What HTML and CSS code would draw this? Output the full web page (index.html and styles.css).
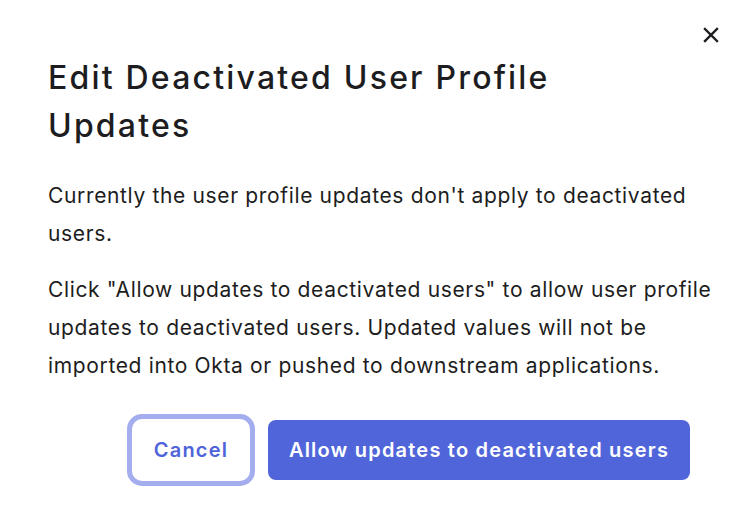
FILE: index.html
```html
<!DOCTYPE html>
<html lang="en">
<head>
<meta charset="utf-8">
<link rel="stylesheet" href="styles.css">
</head>
<body>
<div class="dialog">
  <button class="close" aria-label="Close">
    <svg width="16" height="16" viewBox="0 0 16 16"><path d="M2 2 L14 14 M14 2 L2 14" stroke="#1d1d21" stroke-width="2.4" stroke-linecap="square" fill="none"/></svg>
  </button>
  <h1 class="title">Edit Deactivated User Profile Updates</h1>
  <div class="content">
    <p>Currently the user profile updates don't apply to deactivated users.</p>
    <p>Click "Allow updates to deactivated users" to allow user profile updates to deactivated users. Updated values will not be imported into Okta or pushed to downstream applications.</p>
  </div>
  <div class="actions">
    <button class="btn btn-secondary">Cancel</button>
    <button class="btn btn-primary">Allow updates to deactivated users</button>
  </div>
</div>
</body>
</html>
```
FILE: styles.css
```css
html, body {
  margin: 0;
  padding: 0;
  background: #ffffff;
}
body {
  font-family: Inter, "Noto Sans", sans-serif;
  color: #1d1d21;
  width: 754px;
  height: 514px;
  overflow: hidden;
}
.dialog {
  position: relative;
  padding: 54px 30px 0 48px;
}
.close {
  position: absolute;
  top: 27px;
  right: 35px;
  width: 16px;
  height: 16px;
  padding: 0;
  border: 0;
  background: none;
  display: flex;
}
.title {
  margin: 0;
  font-size: 32px;
  line-height: 48px;
  font-weight: 500;
  letter-spacing: 2.2px;
  max-width: 560px;
}
.content {
  margin-top: 27px;
  max-width: 672px;
}
.content p {
  margin: 0;
  font-size: 21px;
  line-height: 38px;
  font-weight: 400;
  letter-spacing: 0.65px;
  color: #1d1d21;
}
.content p + p {
  margin-top: 18px;
}
.actions {
  display: flex;
  justify-content: flex-end;
  gap: 19px;
  margin-top: 35px;
  padding-right: 34px;
}
.btn {
  font-family: Inter, "Noto Sans", sans-serif;
  font-size: 20px;
  font-weight: 600;
  letter-spacing: 1.2px;
  height: 60px;
  border-radius: 8px;
  border: 0;
  padding: 0;
  cursor: pointer;
}
.btn-secondary {
  background: #ffffff;
  color: #5064d9;
  width: 116px;
  box-shadow: 0 0 0 1px #ffffff, 0 0 0 6px #a4adee;
  border-radius: 9px;
}
.btn-primary {
  background: #5165da;
  color: #ffffff;
  width: 422px;
}
```
